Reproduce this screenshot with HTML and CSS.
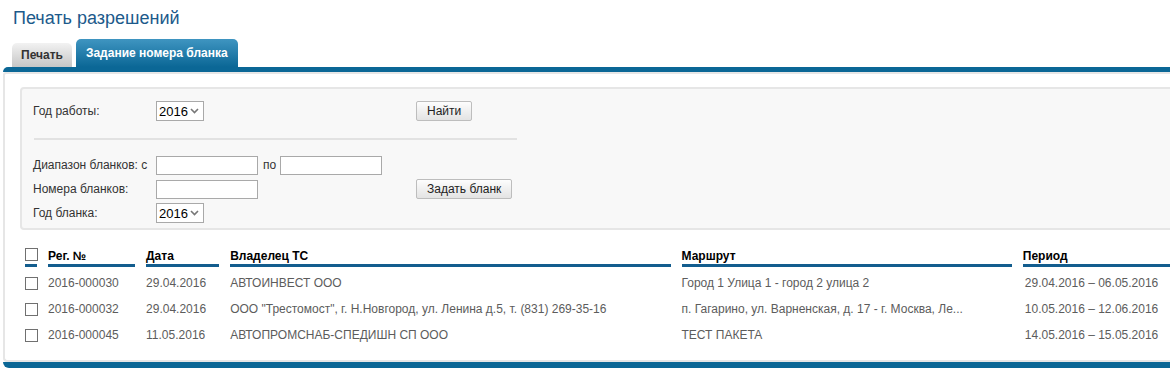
FILE: index.html
```html
<!DOCTYPE html>
<html lang="ru">
<head>
  <meta charset="UTF-8">
  <title>Печать разрешений</title>
  <link rel="stylesheet" href="styles.css">
</head>
<body>
  <div class="page">
    <h1 class="page-title">Печать разрешений</h1>

    <div class="tabs">
      <a href="#" class="tab">Печать</a>
      <a href="#" class="tab tab-active">Задание номера бланка</a>
    </div>

    <div class="panel">
      <div class="panel-inner">
        <form class="search-box">
          <div class="form-row">
            <label class="form-label" for="workYear">Год работы:</label>
            <div class="form-field">
              <select id="workYear" class="year-select">
                <option>2016</option>
                <option>2015</option>
              </select>
            </div>
            <div class="form-action">
              <button type="button" class="btn">Найти</button>
            </div>
          </div>

          <div class="separator"></div>

          <div class="form-row">
            <label class="form-label" for="rangeFrom">Диапазон бланков: с</label>
            <div class="form-field">
              <input type="text" id="rangeFrom" class="text-input">
              <span class="range-to">по</span>
              <input type="text" id="rangeTo" class="text-input">
            </div>
          </div>

          <div class="form-row">
            <label class="form-label" for="blankNumbers">Номера бланков:</label>
            <div class="form-field">
              <input type="text" id="blankNumbers" class="text-input">
            </div>
            <div class="form-action">
              <button type="button" class="btn">Задать бланк</button>
            </div>
          </div>

          <div class="form-row">
            <label class="form-label" for="blankYear">Год бланка:</label>
            <div class="form-field">
              <select id="blankYear" class="year-select">
                <option>2016</option>
                <option>2015</option>
              </select>
            </div>
          </div>
        </form>

        <table class="grid">
          <thead>
            <tr>
              <th class="col-check"><input type="checkbox" class="check"></th>
              <th class="col-reg">Рег. №</th>
              <th class="col-date">Дата</th>
              <th class="col-owner">Владелец ТС</th>
              <th class="col-route">Маршрут</th>
              <th class="col-period">Период</th>
            </tr>
          </thead>
          <tbody>
            <tr>
              <td><input type="checkbox" class="check"></td>
              <td>2016-000030</td>
              <td>29.04.2016</td>
              <td>АВТОИНВЕСТ ООО</td>
              <td>Город 1 Улица 1 - город 2 улица 2</td>
              <td class="period">29.04.2016 – 06.05.2016</td>
            </tr>
            <tr>
              <td><input type="checkbox" class="check"></td>
              <td>2016-000032</td>
              <td>29.04.2016</td>
              <td>ООО "Трестомост", г. Н.Новгород, ул. Ленина д.5, т. (831) 269-35-16</td>
              <td>п. Гагарино, ул. Варненская, д. 17 - г. Москва, Ле...</td>
              <td class="period">10.05.2016 – 12.06.2016</td>
            </tr>
            <tr>
              <td><input type="checkbox" class="check"></td>
              <td>2016-000045</td>
              <td>11.05.2016</td>
              <td>АВТОПРОМСНАБ-СПЕДИШН СП ООО</td>
              <td>ТЕСТ ПАКЕТА</td>
              <td class="period">14.05.2016 – 15.05.2016</td>
            </tr>
          </tbody>
        </table>
      </div>
    </div>
  </div>
</body>
</html>
```

FILE: styles.css
```css
* {
  margin: 0;
  padding: 0;
  box-sizing: border-box;
}

body {
  background-color: #fff;
  color: #333;
  font-family: 'Liberation Sans', Arial, sans-serif;
  font-size: 12px;
  overflow: hidden;
}

.page {
  width: 1220px;
}

.page-title {
  margin: 8px 0 0 13px;
  font-size: 18px;
  line-height: 21px;
  font-weight: normal;
  color: #1c5a8b;
}

/* tabs */
.tabs {
  display: flex;
  align-items: flex-end;
  gap: 4px;
  margin: 10px 0 0 12px;
  height: 28px;
}

.tab {
  display: block;
  height: 24px;
  padding: 0 9px;
  line-height: 25px;
  font-weight: bold;
  color: #333;
  text-decoration: none;
  border-radius: 5px 5px 0 0;
  background: linear-gradient(#f2f2f2, #c6c6c6);
}

.tab-active {
  height: 28px;
  line-height: 29px;
  padding: 0 10px;
  color: #fff;
  background: linear-gradient(#3f95c1, #0b6796);
}

/* panel */
.panel {
  margin-left: 3px;
  border-top: 5px solid #0b6796;
  border-bottom: 6px solid #0b6796;
  border-radius: 5px 0 0 6px;
}

.panel-inner {
  border-top: 2px solid #e6e6e6;
  border-left: 2px solid #e6e6e6;
  border-bottom: 2px solid #e6e6e6;
  border-radius: 3px 0 0 4px;
  padding: 13px 0 12px 15px;
}

/* search form */
.search-box {
  background-color: #f8f8f8;
  border: 2px solid #e6e6e6;
  border-radius: 4px;
  padding: 10px 0 3px 11px;
}

.form-row {
  display: grid;
  grid-template-columns: 123px 260px auto;
  align-items: center;
  height: 24px;
}

.form-label {
  color: #333;
  white-space: nowrap;
}

.form-field {
  display: flex;
  align-items: center;
}

.year-select {
  -webkit-appearance: none;
  appearance: none;
  width: 48px;
  height: 20px;
  padding: 0 0 0 2px;
  border: 1px solid #a9a9a9;
  border-radius: 0;
  font-family: 'Liberation Sans', Arial, sans-serif;
  font-size: 13px;
  color: #000;
  background: #fff url("data:image/svg+xml,%3Csvg xmlns='http://www.w3.org/2000/svg' width='9' height='6' viewBox='0 0 9 6'%3E%3Cpath d='M1 1l3.5 3.5L8 1' fill='none' stroke='%23777' stroke-width='1.6'/%3E%3C/svg%3E") no-repeat right 4px center;
}

.text-input {
  width: 102px;
  height: 19px;
  border: 1px solid #a9a9a9;
  background-color: #fff;
}

.range-to {
  margin: 0 4px 0 5px;
}

.btn {
  height: 20px;
  padding: 0 10px;
  border: 1px solid #bdbdbd;
  border-radius: 2px;
  background: linear-gradient(#fdfdfd, #e3e3e3);
  font-family: 'Liberation Sans', Arial, sans-serif;
  font-size: 12px;
  color: #222;
}

.separator {
  width: 483px;
  height: 2px;
  background-color: #e2e2e2;
  margin: 15px 0 13px 1px;
}

/* results grid */
.grid {
  margin: 18px 0 0 -6px;
  border-collapse: separate;
  border-spacing: 11px 0;
  table-layout: fixed;
  width: 1200px;
}

.grid th {
  text-align: left;
  font-weight: bold;
  color: #000;
  line-height: 14px;
  padding-bottom: 1px;
  border-bottom: 3px solid #135d8e;
  vertical-align: bottom;
}

.col-check { width: 12px; }
.col-reg { width: 87px; }
.col-date { width: 73px; }
.col-owner { width: 440px; }
.col-route { width: 330px; }
.col-period { width: 180px; }

.grid td {
  line-height: 26px;
  color: #5c5c5c;
  white-space: nowrap;
  vertical-align: middle;
}

.grid tbody tr:first-child td {
  padding-top: 3px;
}

.grid td.period {
  padding-left: 2px;
}

.check {
  -webkit-appearance: none;
  appearance: none;
  display: block;
  width: 13px;
  height: 13px;
  border: 1px solid #707070;
  background-color: #fff;
}

.grid th .check {
  margin-bottom: 2px;
}
```
